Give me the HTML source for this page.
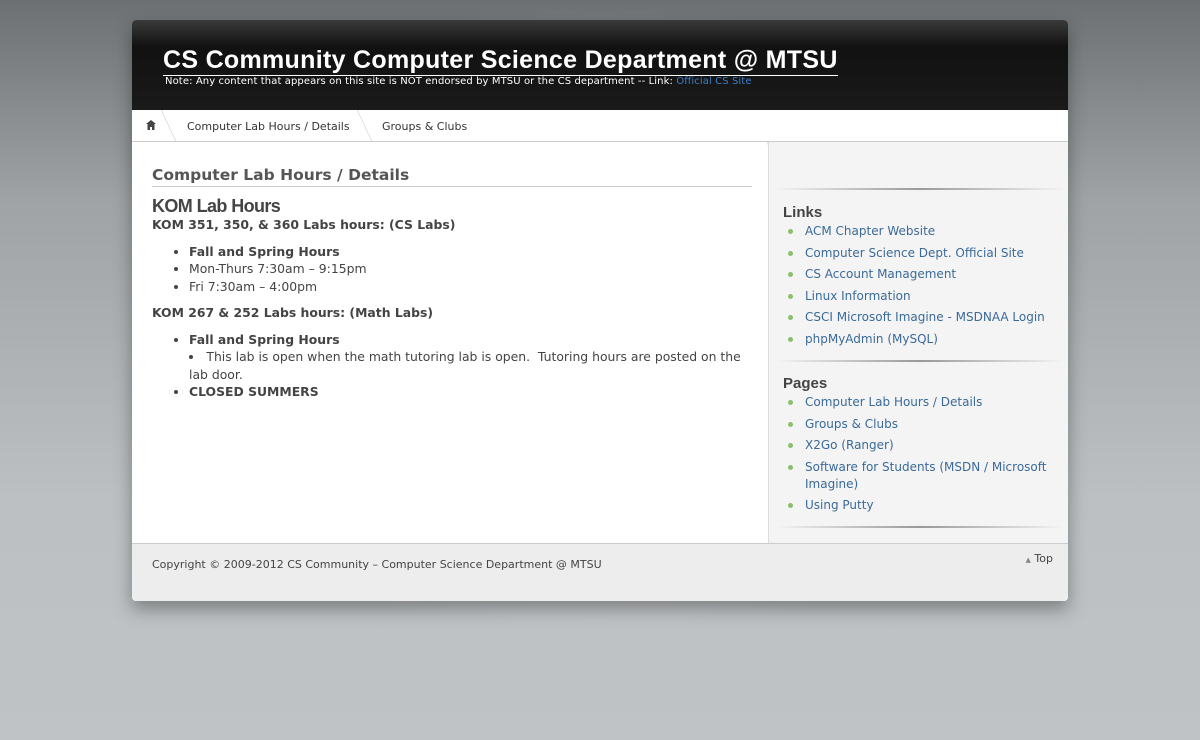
<!DOCTYPE html>
<html><head><meta charset="utf-8"><style>
*{margin:0;padding:0;box-sizing:border-box}
html,body{width:1200px;height:740px;overflow:hidden}
body{background:linear-gradient(#6c7072 0px,#9fa3a5 200px,#bcc0c2 500px,#bfc3c5 740px);font-family:"DejaVu Sans",Verdana,sans-serif;color:#444}
#glow{position:absolute;left:110px;top:0;width:980px;height:640px;background:radial-gradient(ellipse at center,rgba(255,255,255,.55),rgba(255,255,255,0) 70%)}
#wrap{position:absolute;left:132px;top:20px;width:936px;height:581px;border-radius:4px;box-shadow:0 8px 18px rgba(0,0,0,.35);overflow:hidden;background:#fff}
#hdr{height:90px;background:linear-gradient(#3a3a3a,#111 30%,#1a1a1a);position:relative}
#hdr h1{position:absolute;left:31px;top:25px;font:bold 25px "Liberation Sans",sans-serif;color:#fff;border-bottom:1px solid #fff;line-height:30px;letter-spacing:.3px}
#hdr p{position:absolute;left:33px;top:56px;font-size:10px;color:#fff;letter-spacing:.1px}
#hdr p span{color:#3d7ec4}
#nav{height:32px;background:#fff;border-bottom:1px solid #ccc;box-shadow:0 2px 3px rgba(0,0,0,.15);position:relative;font-size:11px;color:#333}
#nav div{position:absolute;top:10px}
#main{position:absolute;left:0;top:122px;width:635px;height:401px;background:#fff}
#side{position:absolute;left:636px;top:122px;width:300px;height:401px;background:#f4f4f4;border-left:1px solid #ddd}
h2{position:absolute;left:20px;top:24px;width:600px;font:bold 15.5px "DejaVu Sans",sans-serif;color:#555;border-bottom:1px solid #ccc;padding-bottom:2px}
.c{position:absolute;left:20px;top:54px;width:590px;font-size:12.4px;line-height:17.5px}
.c h3{font:bold 18px "Liberation Sans",sans-serif;color:#444;letter-spacing:-.6px;line-height:20px}
.c ul{margin:9px 0 9px 37px}
.c b{color:#444}
.sec{position:absolute;left:14px;font-size:12px}
.sec h4{font:bold 15px "Liberation Sans",sans-serif;color:#444}
.sec li{list-style:none;color:#3b6a99;padding-left:22px;position:relative;line-height:17px;margin-bottom:4.5px}
.sec li:before{content:"";position:absolute;left:5px;top:6px;width:5px;height:5px;border-radius:50%;background:#8bbf6a}
.sep{position:absolute;left:6px;width:290px;height:2px;background:linear-gradient(90deg,#f4f4f4,#999 50%,#f4f4f4)}
#foot{position:absolute;left:0;top:523px;width:936px;height:58px;background:#ededed;border-top:1px solid #ccc;font-size:11px;color:#444}
</style></head><body>
<div id="glow"></div>
<div id="wrap">
<div id="hdr"><h1>CS Community Computer Science Department @ MTSU</h1>
<p>Note: Any content that appears on this site is NOT endorsed by MTSU or the CS department -- Link: <span>Official CS Site</span></p></div>
<div id="nav">
<div style="left:13px;top:9px"><svg width="12" height="12" viewBox="0 0 12 12"><path d="M6 1L1 5h1.5v6h2.5V8h2v3h2.5V5H11z" fill="#444"/></svg></div>
<div style="left:36px;top:0;height:31px;width:1px;border-left:1px solid #ddd;transform:skewX(25deg)"></div>
<div style="left:55px">Computer Lab Hours / Details</div>
<div style="left:232px;top:0;height:31px;width:1px;border-left:1px solid #ddd;transform:skewX(25deg)"></div>
<div style="left:250px">Groups &amp; Clubs</div>
</div>
<div id="main">
<h2>Computer Lab Hours / Details</h2>
<div class="c">
<h3>KOM Lab Hours</h3>
<b>KOM 351, 350, &amp; 360 Labs hours: (CS Labs)</b>
<ul><li><b>Fall and Spring Hours</b></li><li>Mon-Thurs 7:30am – 9:15pm</li><li>Fri 7:30am – 4:00pm</li></ul>
<b>KOM 267 &amp; 252 Labs hours: (Math Labs)</b>
<ul style="margin-left:20px;padding-left:17px"><li><b>Fall and Spring Hours</b></li><li style="margin-left:-17px;padding-left:17px;list-style-position:inside">This lab is open when the math tutoring lab is open.&nbsp; Tutoring hours are posted on the lab door.</li><li><b>CLOSED SUMMERS</b></li></ul>
</div></div>
<div id="side">
<div class="sep" style="top:46px"></div>
<div class="sec" style="top:62px"><h4>Links</h4><ul style="margin-top:2px">
<li>ACM Chapter Website</li><li>Computer Science Dept. Official Site</li><li>CS Account Management</li><li>Linux Information</li><li>CSCI Microsoft Imagine - MSDNAA Login</li><li>phpMyAdmin (MySQL)</li></ul></div>
<div class="sep" style="top:218px"></div>
<div class="sec" style="top:233px"><h4>Pages</h4><ul style="margin-top:2px">
<li>Computer Lab Hours / Details</li><li>Groups &amp; Clubs</li><li>X2Go (Ranger)</li><li>Software for Students (MSDN / Microsoft Imagine)</li><li>Using Putty</li></ul></div>
<div class="sep" style="top:384px"></div>
</div>
<div id="foot"><div style="position:absolute;left:20px;top:14px">Copyright © 2009-2012 CS Community – Computer Science Department @ MTSU</div>
<div style="position:absolute;right:15px;top:8px"><span style="font-size:7px;color:#888">▲</span> Top</div></div>
</div>
</body></html>
